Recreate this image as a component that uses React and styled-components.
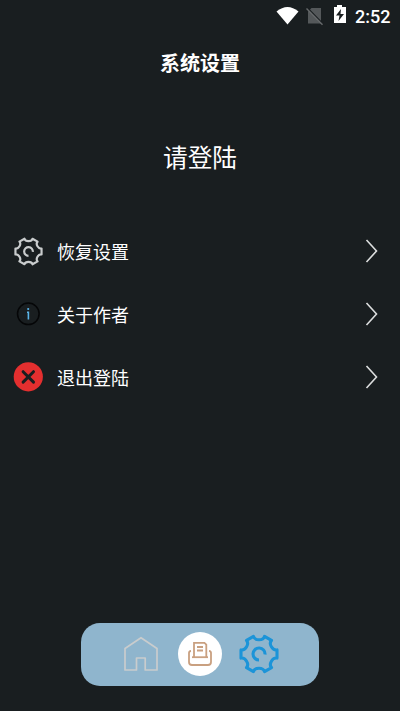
import styled, { createGlobalStyle } from "styled-components";

const background = "#191e20";
const white = "#fff";
const barBlue = "#8fb5cd";
const activeBlue = "#1c94d8";
const softGrey = "#c9cccd";

const GlobalStyle = createGlobalStyle`
  * {
    box-sizing: border-box;
  }

  body {
    margin: 0;
    background: ${background};
    color: ${white};
    font-family: Roboto, "Noto Sans CJK SC", sans-serif;
  }
`;

const Screen = styled.div`
  display: flex;
  flex-direction: column;
  align-items: center;
  width: 100%;
  height: 100vh;
  overflow: hidden;
`;

const StatusBar = styled.header`
  display: flex;
  justify-content: flex-end;
  align-items: center;
  width: 100%;
  height: 32px;
  padding-right: 10px;

  svg {
    display: block;
  }
`;

const Clock = styled.span`
  width: 35px;
  padding-top: 2px;
  font-size: 18px;
  font-weight: 500;
  line-height: 32px;
  white-space: nowrap;
`;

const Title = styled.h1`
  margin: 2px 0 0;
  height: 60px;
  font-size: 20px;
  font-weight: 700;
  line-height: 60px;
`;

const LoginPrompt = styled.p`
  margin: 35px 0 0;
  height: 60px;
  font-size: 24.7px;
  line-height: 60px;
`;

const Menu = styled.ul`
  width: 100%;
  margin: 31px 0 0;
  padding: 0;
  list-style: none;
`;

const MenuItem = styled.li`
  display: flex;
  align-items: center;
  height: 63px;
  padding: 0 22px 1px 13px;

  .icon {
    display: flex;
    justify-content: center;
    width: 30px;
  }

  .label {
    flex: 1;
    margin-left: 14px;
    padding-top: 4px;
    font-size: 18px;
    line-height: 26px;
  }
`;

const TabBar = styled.nav`
  display: flex;
  align-items: center;
  width: 238px;
  height: 63px;
  margin: auto 0 25px;
  padding: 0 40px 1px 42px;
  border-radius: 19px;
  background: ${barBlue};
`;

const PrintButton = styled.div`
  display: flex;
  align-items: center;
  justify-content: center;
  width: 44px;
  height: 44px;
  margin: 0 17px 0 19px;
  border-radius: 50%;
  background: ${white};
`;

function Gear({ size, color, stroke }) {
  return (
    <svg width={size} height={size} viewBox="0 0 40 40" fill="none" stroke={color} strokeWidth={stroke} strokeLinejoin="round">
      <path d="M14.5 2.4 Q15.5 5.8 20 5.8 T25.5 2.4 L32.5 6.4 Q30.1 9 32.4 12.8 T38 15.9 V24.1 Q34.6 23.4 32.4 27.2 T32.5 33.6 L25.5 37.6 Q24.5 34.2 20 34.2 T14.5 37.6 L7.5 33.6 Q9.9 31 7.6 27.2 T2 24.1 V15.9 Q5.4 16.6 7.6 12.8 T7.5 6.4 Z" />
      <path d="M20 26 A6 6 0 1 1 26 20.5" />
    </svg>
  );
}

function Info() {
  return (
    <svg width="30" height="30" viewBox="0 0 30 30" fill="none">
      <circle cx="15.3" cy="14.8" r="10.8" stroke="#050607" strokeWidth="1.5" />
      <circle cx="15.2" cy="10" r="1.1" fill="#5ab4e8" />
      <path d="M14 13.2 H15.4 V20.4" stroke="#5ab4e8" strokeWidth="1.6" />
    </svg>
  );
}

function Close() {
  return (
    <svg width="30" height="30" viewBox="0 0 30 30">
      <circle cx="15.3" cy="14.8" r="14.6" fill="#e42f2f" />
      <path d="M10.1 9.7 L20.5 20.1 M20.5 9.7 L10.1 20.1" stroke={background} strokeWidth="3" strokeLinecap="round" />
    </svg>
  );
}

function Arrow() {
  return (
    <svg width="13" height="24" viewBox="0 0 13 24" fill="none">
      <path d="M1.5 1 L11.5 12 L1.5 23" stroke="#dcdede" strokeWidth="1.6" />
    </svg>
  );
}

function Home() {
  return (
    <svg width="36" height="36" viewBox="0 0 36 36" fill="none">
      <path d="M2 12.5 L18 1.7 L34 12.5 V34 H22.2 V22 H13.5 V34 H2 Z" stroke={softGrey} strokeWidth="1.7" strokeLinejoin="round" />
    </svg>
  );
}

function Printer() {
  return (
    <svg width="26" height="26" viewBox="0 0 26 26" fill="none" stroke="#c9a080" strokeWidth="1.8">
      <path d="M7 16 V1.9 H17.5 L19.3 3.7 V16" />
      <path d="M10 6 H16 M10 9.5 H16" />
      <path d="M4 9.8 Q2 10 2 12 V21 Q2 24 5 24 H21 Q24 24 24 21 V12 Q24 10 22 9.8" />
      <path d="M5 16.2 H21" />
    </svg>
  );
}

const items = [
  { label: "恢复设置", icon: <Gear size={29} color={softGrey} stroke={3} /> },
  { label: "关于作者", icon: <Info /> },
  { label: "退出登陆", icon: <Close /> },
];

export default function App() {
  return (
    <Screen>
      <GlobalStyle />
      <StatusBar>
        <svg width="79" height="24" viewBox="0 0 79 24">
          <path d="M11.5 20.5 L0.5 7.5 Q11.5 -1.5 22.5 7.5 Z" fill={white} />
          <path d="M32 7.5 L35.5 4 H45 V19.5 H32 Z" fill="#54585a" />
          <path d="M31.5 4 L47.5 20.5" stroke={background} strokeWidth="1.6" />
          <path d="M30.5 4.5 L46.5 20.8" stroke="#66696b" strokeWidth="1.4" />
          <path d="M58 3 H61 V1 H66 V3 H70 V19 H58 Z" fill={white} />
          <path d="M65 5 L60 11.5 H63.5 L62.5 17 L68 10 H64.5 Z" fill={background} />
        </svg>
        <Clock>2:52</Clock>
      </StatusBar>
      <Title>系统设置</Title>
      <LoginPrompt>请登陆</LoginPrompt>
      <Menu>
        {items.map((item) => (
          <MenuItem key={item.label}>
            <div className="icon">{item.icon}</div>
            <span className="label">{item.label}</span>
            <Arrow />
          </MenuItem>
        ))}
      </Menu>
      <TabBar>
        <Home />
        <PrintButton>
          <Printer />
        </PrintButton>
        <Gear size={40} color={activeBlue} stroke={3.1} />
      </TabBar>
    </Screen>
  );
}
